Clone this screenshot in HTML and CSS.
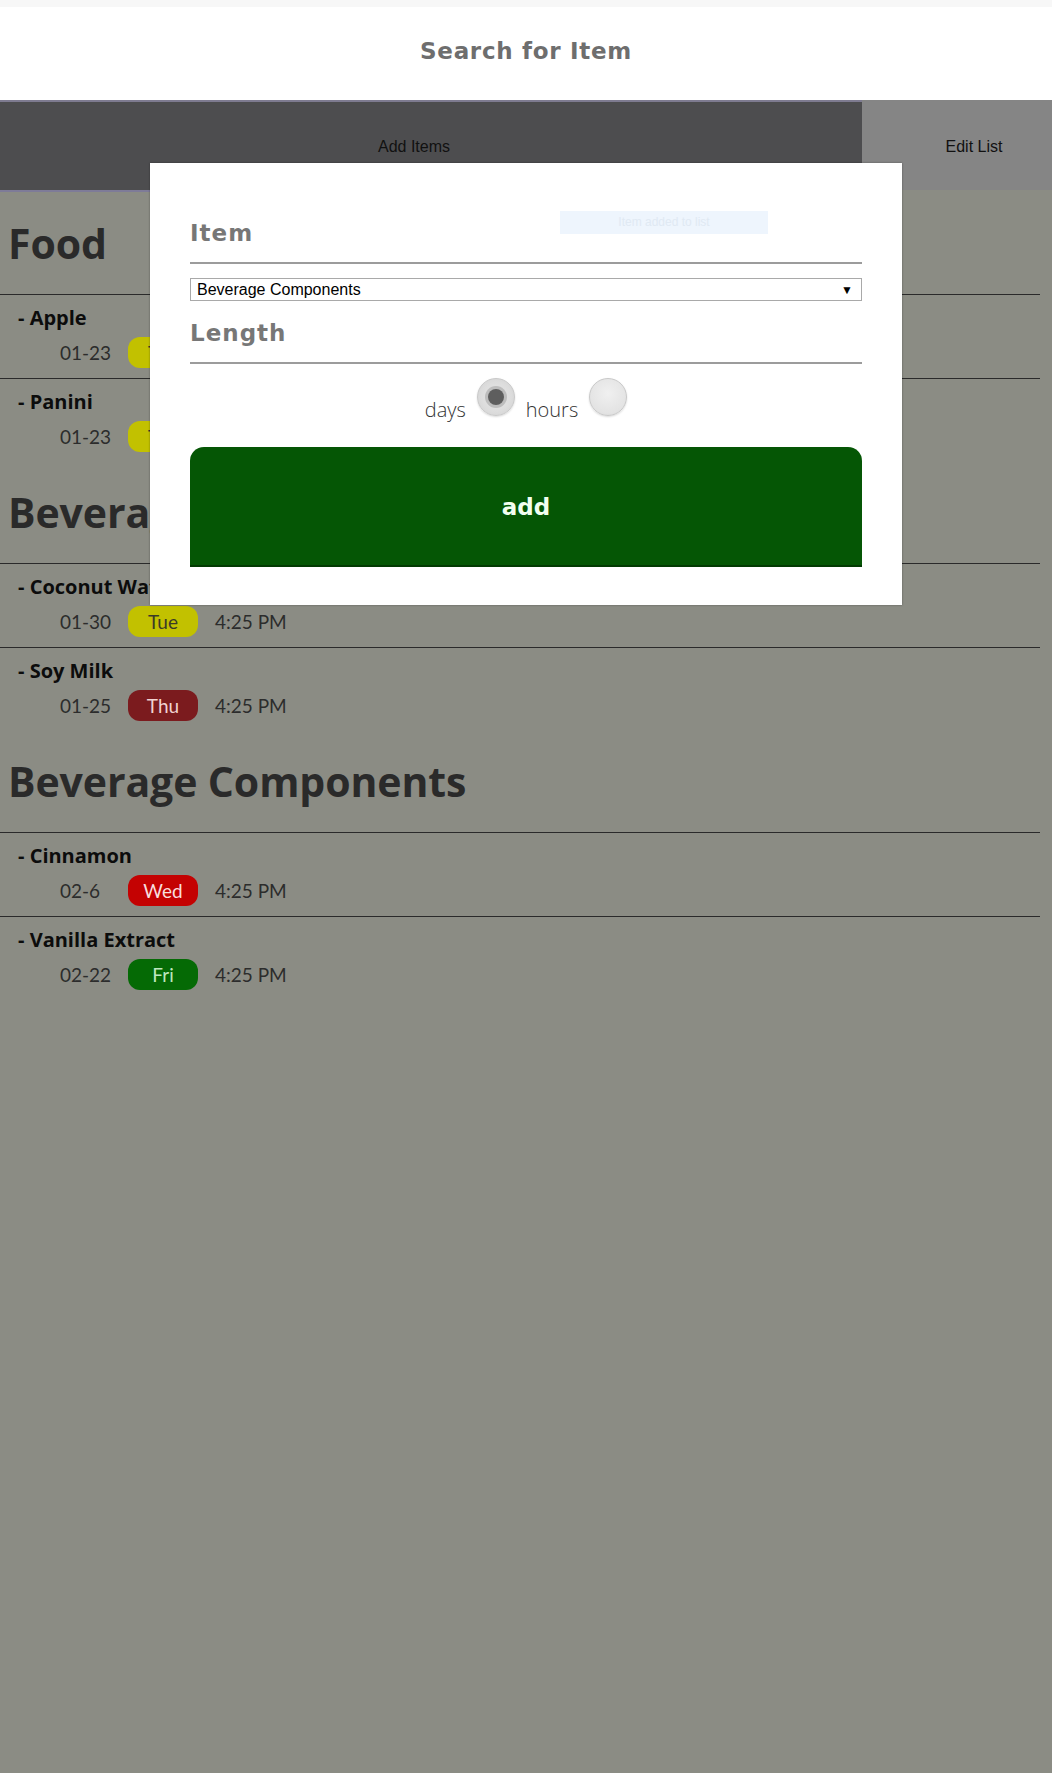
FILE: index.html
```html
<!DOCTYPE html>
<html>
<head>
<meta charset="utf-8">
<title>Search for Item</title>
<link rel="stylesheet" href="styles.css">
</head>
<body>
<header class="top">
  <h1 class="title">Search for Item</h1>
</header>
<nav class="tabs">
  <div class="tab tab-active"><span>Add Items</span></div>
  <div class="tab tab-other"><span>Edit List</span></div>
</nav>
<main class="list">
  <section class="group">
    <h2 class="group-title">Food</h2>
    <div class="row">
      <div class="name">- Apple</div>
      <div class="when"><span class="date">01-23</span><span class="day day-tue">Tue</span><span class="time">4:25 PM</span></div>
    </div>
    <div class="row">
      <div class="name">- Panini</div>
      <div class="when"><span class="date">01-23</span><span class="day day-tue">Tue</span><span class="time">4:25 PM</span></div>
    </div>
  </section>
  <section class="group">
    <h2 class="group-title">Beverages</h2>
    <div class="row">
      <div class="name">- Coconut Water</div>
      <div class="when"><span class="date">01-30</span><span class="day day-tue">Tue</span><span class="time">4:25 PM</span></div>
    </div>
    <div class="row">
      <div class="name">- Soy Milk</div>
      <div class="when"><span class="date">01-25</span><span class="day day-thu">Thu</span><span class="time">4:25 PM</span></div>
    </div>
  </section>
  <section class="group">
    <h2 class="group-title">Beverage Components</h2>
    <div class="row">
      <div class="name">- Cinnamon</div>
      <div class="when"><span class="date">02-6</span><span class="day day-wed">Wed</span><span class="time">4:25 PM</span></div>
    </div>
    <div class="row">
      <div class="name">- Vanilla Extract</div>
      <div class="when"><span class="date">02-22</span><span class="day day-fri">Fri</span><span class="time">4:25 PM</span></div>
    </div>
  </section>
</main>

<div class="modal">
  <div class="notice">Item added to list</div>
  <div class="label">Item</div>
  <div class="rule"></div>
  <div class="select"><span>Beverage Components</span><span class="arrow">&#9660;</span></div>
  <div class="label label-length">Length</div>
  <div class="rule"></div>
  <div class="units">
    <span class="unit-text">days</span>
    <span class="radio radio-on"><span class="dot"></span></span>
    <span class="unit-text">hours</span>
    <span class="radio"></span>
  </div>
  <div class="add-btn">add</div>
</div>
</body>
</html>
```

FILE: styles.css
```css
html, body {
  margin: 0;
  padding: 0;
}
body {
  background: #8b8c84;
  font-family: "Lato", "Open Sans", sans-serif;
  min-height: 1773px;
  position: relative;
}

.top {
  background: #ffffff;
  border-top: 7px solid #f7f7f7;
  height: 93px;
  display: flex;
  align-items: center;
  justify-content: center;
}
.title {
  margin: 0;
  margin-top: -6px;
  font-family: "DejaVu Sans", "Liberation Sans", sans-serif;
  font-weight: 700;
  font-size: 23px;
  letter-spacing: 0.7px;
  color: #6e6e6e;
}

.tabs {
  display: flex;
  height: 92px;
}
.tab {
  display: flex;
  align-items: center;
  font-family: "Liberation Sans", Arial, sans-serif;
  font-size: 16px;
  color: #111;
}
.tab-active {
  flex: 0 0 862px;
  background: #4d4d4f;
  border-top: 2px solid #7e7b90;
  border-bottom: 2px solid #7e7b98;
  box-sizing: border-box;
  justify-content: center;
  padding-right: 34px;
  padding-top: 2px;
}
.tab-other {
  flex: 1;
  background: #858585;
  height: 90px;
  box-sizing: border-box;
  justify-content: center;
  padding-left: 34px;
  padding-top: 4px;
}

.list {
  width: 1040px;
}
.group-title {
  margin: 27px 0 27px 8px;
  font-family: "Open Sans", sans-serif;
  font-weight: 700;
  font-size: 41px;
  line-height: 48px;
  letter-spacing: -0.1px;
  color: #2a2a2a;
}
.group + .group .group-title {
  margin-top: 26px;
}
.row {
  border-top: 1px solid #2a2a2a;
  padding: 11px 0 9px;
}
.name {
  padding-left: 18px;
  font-family: "Open Sans", sans-serif;
  font-weight: 700;
  font-size: 20px;
  line-height: 24px;
  color: #0c0c0c;
}
.when {
  display: flex;
  align-items: center;
  height: 34px;
  margin-top: 5px;
  font-size: 19px;
  font-weight: 400;
  color: #2c2c2c;
}
.date {
  width: 68px;
  padding-left: 60px;
}
.day {
  width: 70px;
  height: 31px;
  border-radius: 12px;
  display: flex;
  align-items: center;
  justify-content: center;
  margin-right: 17px;
}
.day-tue { background: #c2c100; color: #3b3a28; }
.day-thu { background: #7b1b1e; color: #f1d3d3; }
.day-wed { background: #c40202; color: #f9dede; }
.day-fri { background: #056a05; color: #bfe6bf; }
.time {
  color: #2c2c2c;
}

.modal {
  position: absolute;
  top: 163px;
  left: 150px;
  width: 752px;
  box-sizing: border-box;
  background: #ffffff;
  padding: 55px 40px 38px;
  box-shadow: 0 0 2px rgba(0,0,0,0.35);
}
.notice {
  position: absolute;
  top: 48px;
  left: 410px;
  width: 208px;
  height: 23px;
  background: #eef5fd;
  color: #e0e9f3;
  font-family: "Liberation Sans", sans-serif;
  font-size: 12px;
  line-height: 23px;
  text-align: center;
}
.label {
  font-family: "DejaVu Sans", "Liberation Sans", sans-serif;
  font-weight: 700;
  font-size: 23px;
  line-height: 30px;
  letter-spacing: 1px;
  color: #777777;
}
.label-length {
  margin-top: 17px;
}
.rule {
  height: 2px;
  background: #9c9c9c;
  margin: 14px 0 14px;
}
.select {
  height: 23px;
  box-sizing: border-box;
  border: 1px solid #a9a9a9;
  display: flex;
  align-items: center;
  justify-content: space-between;
  padding: 0 8px 0 6px;
  font-family: "Liberation Sans", Arial, sans-serif;
  font-size: 16px;
  color: #000;
}
.arrow {
  font-size: 12px;
}
.units {
  display: flex;
  justify-content: center;
  align-items: flex-end;
  gap: 11px;
  margin-top: 2px;
}
.unit-text {
  font-family: "Open Sans", sans-serif;
  font-size: 20px;
  line-height: 24px;
  color: #333;
  font-weight: 300;
}
.radio {
  width: 38px;
  height: 38px;
  box-sizing: border-box;
  border-radius: 50%;
  border: 1px solid #c9c9c9;
  background: radial-gradient(circle at 50% 40%, #f0f0f0 0%, #e3e3e3 70%, #d6d6d6 100%);
  box-shadow: 0 1px 2px rgba(0,0,0,0.15);
  margin-bottom: 6px;
  display: flex;
  align-items: center;
  justify-content: center;
}
.radio-on {
  background: radial-gradient(circle, #e9e9e9 0%, #dcdcdc 60%, #cfcfcf 100%);
}
.dot {
  width: 16px;
  height: 16px;
  border-radius: 50%;
  background: #5e5e5e;
  box-shadow: 0 0 0 3px #bdbdbd;
}
.add-btn {
  margin-top: 25px;
  height: 120px;
  box-sizing: border-box;
  background: #055605;
  border-radius: 14px 14px 0 0;
  border-bottom: 2px solid #033a03;
  display: flex;
  align-items: center;
  justify-content: center;
  font-family: "DejaVu Sans", "Liberation Sans", sans-serif;
  font-weight: 700;
  font-size: 23px;
  color: #f2fff0;
  padding-top: 2px;
}
```
